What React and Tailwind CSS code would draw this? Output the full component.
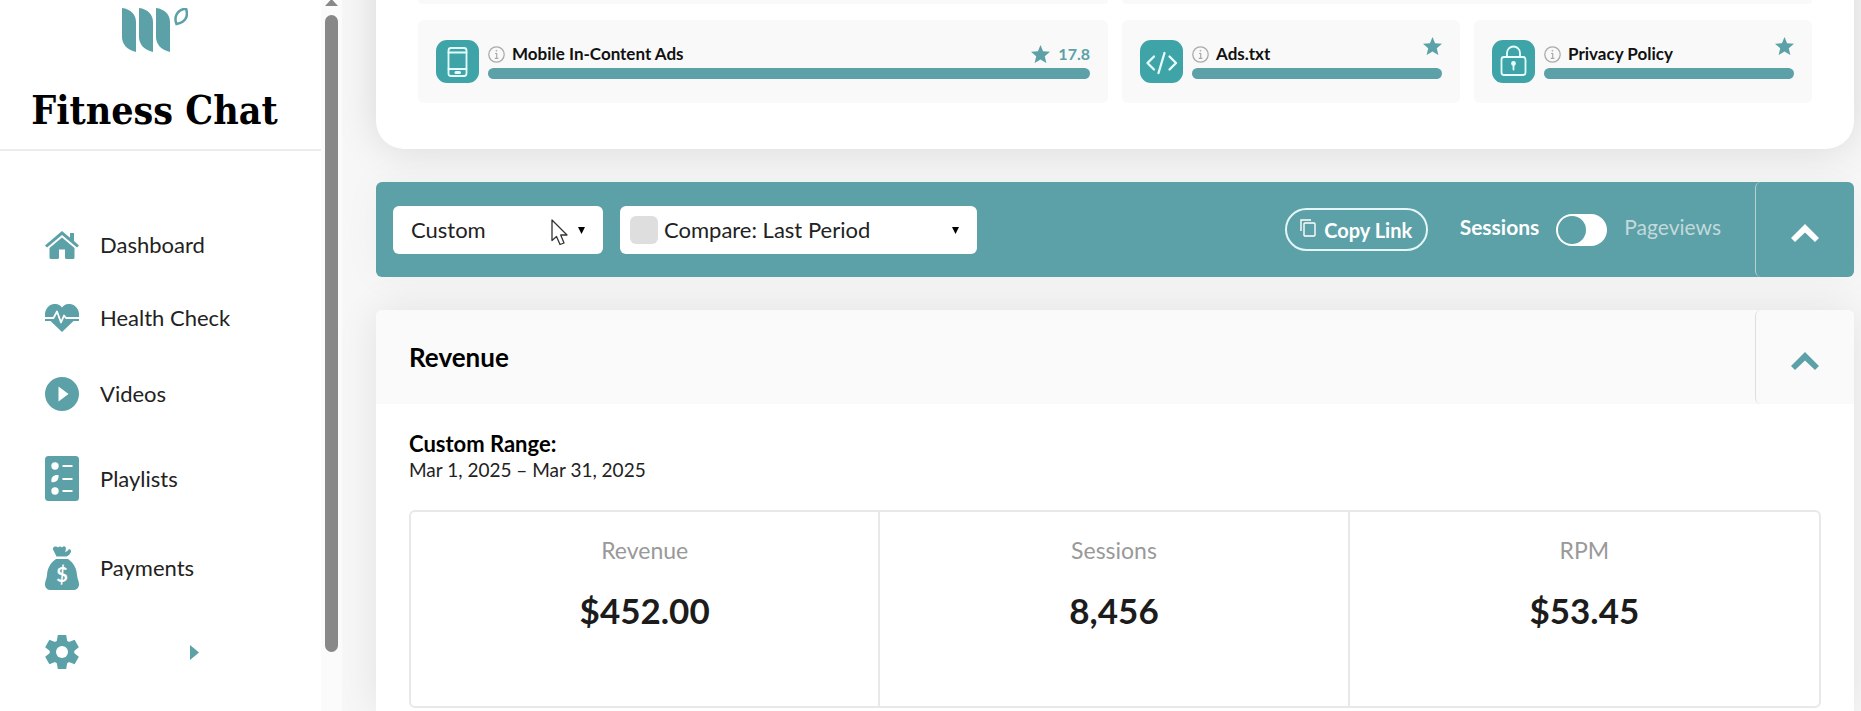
import { useState } from 'react'

const iconCls = 'w-[34px] shrink-0 fill-[#5ba1a7]'

function Logo() {
  return (
    <svg viewBox="0 0 66 44" className="h-11 w-[66px] fill-[#5ba1a7]" aria-hidden="true">
      <path d="M0 0C9 1 14 7 14 14V44C5 42 0 36 0 29Z" />
      <path d="M17 0C26 1 31 7 31 14V44C22 42 17 36 17 29Z" />
      <path d="M34 0C43 1 48 7 48 14V44C39 42 34 36 34 29Z" />
      <path
        d="M54.500 16C52 10 54 2 64 0.500C66.500 8 64 14 54.500 16Z"
        fill="none"
        stroke="#5ba1a7"
        strokeWidth="2.500"
      />
    </svg>
  )
}

function HomeIcon() {
  return (
    <svg viewBox="0 0 34 28" className={iconCls} aria-hidden="true">
      <path d="M17 0 0 14.500 2 16.500 17 4 32 16.500 34 14.500 29 10V2H25V6.800Z" />
      <path d="M17 6.500 4.500 17V26.500Q4.500 28 6 28H12.500Q14 28 14 26.500V18.500H20V26.500Q20 28 21.500 28H28Q29.500 28 29.500 26.500V17Z" />
    </svg>
  )
}

function HeartIcon() {
  return (
    <svg viewBox="0 0 34 28" className={iconCls} aria-hidden="true">
      <path d="M17 3.500C13-1.500 6-1 2.500 3.500C0 6.500 0 9 0 11V17H5.500L17 28 28.500 17H34V11C34 9 34 6.500 31.500 3.500C28 -1 21-1.500 17 3.500Z" />
      <path
        d="M0 14H8.500L12 7.500 16 18.500 19 11.500 21 14H34"
        fill="none"
        stroke="#fff"
        strokeWidth="1.800"
        strokeLinejoin="round"
      />
    </svg>
  )
}

function PlayIcon() {
  return (
    <svg viewBox="0 0 34 34" className={iconCls} aria-hidden="true">
      <circle cx="17" cy="17" r="17" />
      <path d="M13.500 9.500 23.500 17 13.500 24.500Z" fill="#fff" />
    </svg>
  )
}

function ListIcon() {
  return (
    <svg viewBox="0 0 34 45" className={iconCls} aria-hidden="true">
      <rect width="34" height="45" rx="3.500" />
      <g fill="#fff">
        <circle cx="10" cy="10" r="3.700" />
        <path d="M6.500 26C5.500 21 9 18.500 13.500 19C14 23.500 11.500 27 6.500 26Z" />
        <circle cx="10" cy="35" r="3.700" />
        <path d="M17.500 9h10v2h-10zM17.500 22h10v2h-10zM17.500 34h10v2h-10z" />
      </g>
    </svg>
  )
}

function MoneyIcon() {
  return (
    <svg viewBox="0 0 34 44" className={iconCls} aria-hidden="true">
      <path d="M11.500 10.500 8 3.500Q7.500 1 10 0.500 12 0 13 1.500 15-0.500 17 1.500 19-0.500 20.500 1 21.500 3 20 6 23 5.500 24 3 26.500 3.500 26 6 24.500 9.500 21.500 10.500Z" />
      <path d="M11 13H23C29.500 17.500 31.500 23 32 29 32.300 33 34 35 34 38.500 34 42 31.500 44 28 44H6C2.500 44 0 42 0 38.500 0 35 1.700 33 2 29 2.500 23 4.500 17.500 11 13Z" />
      <text x="17" y="35.500" textAnchor="middle" fill="#fff" fontSize="20" fontWeight="700" fontFamily="Lato, sans-serif">
        $
      </text>
    </svg>
  )
}

function GearIcon() {
  return (
    <svg viewBox="-17 -17 34 34" className={iconCls} aria-hidden="true">
      {[0, 60, 120, 180, 240, 300].map((deg) => (
        <path key={deg} d="M-5.500-9-4.200-17H4.200L5.500-9Z" transform={`rotate(${deg})`} />
      ))}
      <circle r="12.300" />
      <circle r="6" fill="#fff" />
    </svg>
  )
}

const nav = [
  { label: 'Dashboard', Icon: HomeIcon },
  { label: 'Health Check', Icon: HeartIcon },
  { label: 'Videos', Icon: PlayIcon },
  { label: 'Playlists', Icon: ListIcon },
  { label: 'Payments', Icon: MoneyIcon },
]

function Sidebar() {
  return (
    <aside className="flex w-[342px] shrink-0 bg-white">
      <div className="flex-1">
        <div className="flex flex-col items-center border-b-2 border-[#ececec] pt-2 pr-3 pb-[17px]">
          <Logo />
          <p className="mt-9 font-['DejaVu_Serif_Condensed','DejaVu_Serif',serif] text-[39px] leading-[44px] font-bold whitespace-nowrap text-black">
            Fitness Chat
          </p>
        </div>
        <nav className="flex flex-col gap-[45px] pt-20 pl-[45px]">
          {nav.map(({ label, Icon }) => (
            <a key={label} href="#" className="flex items-center gap-[21px] text-[22px] leading-7 text-[#222]">
              <Icon />
              {label}
            </a>
          ))}
          <button type="button" aria-label="Settings" className="flex items-center gap-[111px]">
            <GearIcon />
            <svg viewBox="0 0 9 15" className="w-[9px] fill-[#5ba1a7]" aria-hidden="true">
              <path d="M0 0 9 7.500 0 15Z" />
            </svg>
          </button>
        </nav>
      </div>
      {/* scrollbar track */}
      <div className="flex w-[21px] flex-col items-center gap-[9px] bg-[#fbfbfb] pb-[59px]">
        <svg viewBox="0 0 13 6" className="w-[13px] shrink-0 fill-[#888]" aria-hidden="true">
          <path d="M0 6 6.500-1 13 6Z" />
        </svg>
        <div className="w-[13px] flex-1 rounded-full bg-[#888]" />
      </div>
    </aside>
  )
}

function PhoneGlyph() {
  return (
    <>
      <rect x="12.500" y="8" width="18" height="28" rx="2.500" />
      <path d="M12.500 12.500h18M12.500 29h18" />
      <path d="M20 32.500h3.500" strokeWidth="3" />
    </>
  )
}

function CodeGlyph() {
  return <path d="M14 16.500 7.500 23 14 29.500M29.500 16.500 36 23 29.500 29.500M24.500 13 18.500 33" strokeWidth="2.300" />
}

function LockGlyph() {
  return (
    <>
      <rect x="9.500" y="17" width="24" height="18" rx="2.500" />
      <path d="M15 17V13a6.500 6.500 0 0 1 13 0V17" />
      <circle cx="21.500" cy="23.500" r="1.500" fill="#e6ffff" />
      <path d="M21.500 24v5.500" />
    </>
  )
}

function Star() {
  return (
    <svg viewBox="0 0 20 19" className="w-[19px] fill-[#5ba1a7]" aria-hidden="true">
      <path d="M10 0 12.700 6.600 20 7.200 14.500 11.800 16.200 19 10 15.200 3.800 19 5.500 11.800 0 7.200 7.300 6.600Z" />
    </svg>
  )
}

function ScoreTile({ title, score, glyph }) {
  return (
    <div className="flex h-[83px] gap-[9px] rounded-md bg-[#f9f9f9] px-[18px] pt-5">
      <svg viewBox="0 0 43 43" className="size-[43px] shrink-0" aria-hidden="true">
        <rect width="43" height="43" rx="11" fill="#3fa4a8" />
        <g fill="none" stroke="#e6ffff" strokeWidth="1.800" strokeLinecap="round" strokeLinejoin="round">
          {glyph}
        </g>
      </svg>
      <div className="flex-1">
        <div className="flex h-7 items-center text-[17px] leading-5 font-bold text-[#111]">
          <svg viewBox="0 0 17 17" className="mr-[7px] w-[17px] fill-none stroke-[#aaa]" aria-hidden="true">
            <circle cx="8.500" cy="8.500" r="7.700" strokeWidth="1.300" />
            <path d="M7 7.500h1.700V12M6.800 12.300h3.600" strokeWidth="1.200" />
            <circle cx="8.400" cy="4.800" r=".5" />
          </svg>
          {title}
          {score ? (
            <span className="ml-auto flex items-center gap-2 text-base text-[#5ba1a7]">
              <Star />
              {score}
            </span>
          ) : (
            <span className="mb-4 ml-auto">
              <Star />
            </span>
          )}
        </div>
        <div className="h-[11px] rounded-full bg-[#5ba1a7]" />
      </div>
    </div>
  )
}

function Chevron({ className }) {
  return (
    <svg viewBox="0 0 28 18" className={`w-7 ${className}`} aria-hidden="true">
      <path d="M14 0 28 14 24 18 14 8.500 4 18 0 14Z" />
    </svg>
  )
}

function Caret() {
  return (
    <svg viewBox="0 0 7 7" className="pointer-events-none absolute top-[21px] right-[18px] w-[7px]" aria-hidden="true">
      <path d="M0 0h7L3.500 7Z" />
    </svg>
  )
}

function Toolbar() {
  const [compare, setCompare] = useState(false)
  const [pageviews, setPageviews] = useState(false)

  return (
    <section className="flex h-[95px] items-stretch rounded-md bg-[#5ba1a7] shadow-[0_0_40px_rgba(0,0,0,0.04)]">
      <div className="flex flex-1 items-center pl-[17px] text-[22px] text-[#222]">
        <div className="relative h-12 w-[210px] rounded-md bg-white">
          <select aria-label="Date range" className="h-full w-full appearance-none rounded-md pl-[18px]">
            <option>Custom</option>
          </select>
          <Caret />
          {/* mouse pointer */}
          <svg viewBox="0 0 17 27" className="pointer-events-none absolute top-[13px] left-[158px] w-[17px]" aria-hidden="true">
            <path
              d="M1 1V21.500L5.500 17.500 9 25.500 13 24 9.700 16H16Z"
              fill="#fff"
              stroke="#333"
              strokeWidth="1.300"
              strokeLinejoin="round"
            />
          </svg>
        </div>
        <div className="relative ml-[17px] flex h-12 w-[357px] items-center rounded-md bg-white pl-[10px]">
          <input
            type="checkbox"
            aria-label="Enable comparison"
            checked={compare}
            onChange={(e) => setCompare(e.target.checked)}
            className="size-7 shrink-0 appearance-none rounded-md bg-[#dedede] checked:bg-[#5ba1a7]"
          />
          <select aria-label="Compare period" className="h-full flex-1 appearance-none rounded-md pl-[6px]">
            <option>Compare: Last Period</option>
          </select>
          <Caret />
        </div>
        <button
          type="button"
          className="ml-auto flex h-[43px] w-[143px] items-center justify-center gap-2 rounded-full border-2 border-[#e4f6f7] text-xl font-bold text-white"
        >
          <svg viewBox="0 0 16 18" className="mb-1 w-4 fill-none stroke-white" strokeWidth="1.400" aria-hidden="true">
            <path d="M1 12V1h10" />
            <rect x="4" y="4" width="11" height="13" rx="1" />
          </svg>
          Copy Link
        </button>
        <label className="mr-[34px] ml-8 flex items-center text-[21px]">
          <span className="mb-[6px] font-bold text-white">Sessions</span>
          <input
            type="checkbox"
            role="switch"
            aria-label="Show pageviews"
            checked={pageviews}
            onChange={(e) => setPageviews(e.target.checked)}
            className="mx-[17px] h-8 w-[51px] appearance-none rounded-full bg-white p-[2px] before:block before:size-7 before:rounded-full before:bg-[#5ba1a7] checked:before:ml-auto"
          />
          <span className="mb-[6px] text-[#c3d9db]">Pageviews</span>
        </label>
      </div>
      <button
        type="button"
        aria-label="Collapse toolbar"
        className="flex w-[99px] items-center justify-center rounded-md border-l border-[#b9cfd1] pt-[6px]"
      >
        <Chevron className="fill-white" />
      </button>
    </section>
  )
}

const stats = [
  { label: 'Revenue', value: '$452.00' },
  { label: 'Sessions', value: '8,456' },
  { label: 'RPM', value: '$53.45' },
]

function RevenueCard() {
  return (
    <section className="flex-1 rounded-t-md bg-white shadow-[0_0_40px_rgba(0,0,0,0.09)]">
      <header className="flex h-[94px] items-stretch rounded-t-md bg-[#fafafa]">
        <h2 className="flex flex-1 items-center pl-[33px] text-[26px] font-bold text-black">Revenue</h2>
        <button
          type="button"
          aria-label="Collapse revenue"
          className="flex w-[99px] items-center justify-center rounded-md border-l border-[#dedede] pt-2"
        >
          <Chevron className="fill-[#5ba1a7]" />
        </button>
      </header>
      <div className="px-[33px] pt-[26px]">
        <h3 className="text-[22px] leading-7 font-bold text-black">Custom Range:</h3>
        <p className="text-[19px] leading-6 text-[#222]">Mar 1, 2025 – Mar 31, 2025</p>
        <dl className="mt-7 grid h-[198px] grid-cols-3 divide-x-2 divide-[#e8e8e8] rounded-md border-2 border-[#e8e8e8] text-center">
          {stats.map((s) => (
            <div key={s.label} className="pt-6">
              <dt className="text-[23px] leading-7 text-[#999]">{s.label}</dt>
              <dd className="mt-[26px] text-[35px] leading-10 font-bold text-[#1c1c1c]">{s.value}</dd>
            </div>
          ))}
        </dl>
      </div>
    </section>
  )
}

export default function App() {
  return (
    <div className="flex h-screen overflow-hidden bg-[#f7f7f7] font-[Lato,sans-serif]">
      <Sidebar />
      <main className="flex min-w-0 flex-1 flex-col gap-[33px] overflow-hidden pr-[7px] pl-[34px]">
        <section className="-mt-16 rounded-[28px] bg-white px-[42px] pt-16 pb-[46px] shadow-[0_0_40px_rgba(0,0,0,0.13)]">
          {/* tail of the row above */}
          <div className="mb-4 grid h-1 grid-cols-2 gap-[14px]">
            <div className="rounded-b-md bg-[#f9f9f9]" />
            <div className="rounded-b-md bg-[#f9f9f9]" />
          </div>
          <div className="grid grid-cols-2 gap-[14px]">
            <ScoreTile title="Mobile In-Content Ads" score="17.8" glyph={<PhoneGlyph />} />
            <div className="grid grid-cols-2 gap-[14px]">
              <ScoreTile title="Ads.txt" glyph={<CodeGlyph />} />
              <ScoreTile title="Privacy Policy" glyph={<LockGlyph />} />
            </div>
          </div>
        </section>
        <Toolbar />
        <RevenueCard />
      </main>
    </div>
  )
}
